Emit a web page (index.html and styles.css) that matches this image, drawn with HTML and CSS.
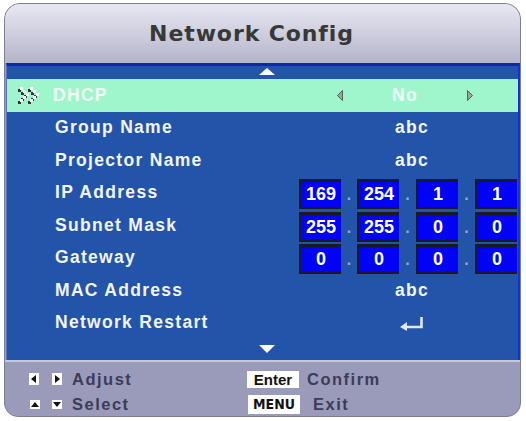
FILE: index.html
```html
<!DOCTYPE html>
<html>
<head>
<meta charset="utf-8">
<link rel="stylesheet" href="styles.css">
</head>
<body>
<div class="panel">
  <div class="title">Network Config</div>
  <div class="menu">
    <div class="arrow-row up"><span class="tri-up"></span></div>

    <div class="row sel">
      <div class="label with-icon">
        <svg class="chev" width="25" height="18" viewBox="0 0 25 18">
          <g fill="#2c3a32">
            <rect x="1" y="3" width="3" height="3"/><rect x="4" y="6" width="3" height="3"/><rect x="7" y="9" width="3" height="3"/><rect x="4" y="12" width="3" height="3"/><rect x="1" y="15" width="3" height="3"/>
            <rect x="11" y="3" width="3" height="3"/><rect x="14" y="6" width="3" height="3"/><rect x="17" y="9" width="3" height="3"/><rect x="14" y="12" width="3" height="3"/><rect x="11" y="15" width="3" height="3"/>
          </g>
          <g fill="#ffffff">
            <rect x="3" y="1" width="3" height="3"/><rect x="6" y="4" width="3" height="3"/><rect x="9" y="7" width="3" height="3"/><rect x="6" y="10" width="3" height="3"/><rect x="3" y="13" width="3" height="3"/>
            <rect x="13" y="1" width="3" height="3"/><rect x="16" y="4" width="3" height="3"/><rect x="19" y="7" width="3" height="3"/><rect x="16" y="10" width="3" height="3"/><rect x="13" y="13" width="3" height="3"/>
          </g>
        </svg>
        <span>DHCP</span>
      </div>
      <div class="val-dhcp">
        <svg width="6" height="11" viewBox="0 0 6 11"><polygon points="5.5,0.5 0.5,5.5 5.5,10.5" fill="#9aa4a0" stroke="#56605a" stroke-width="1"/></svg>
        <span class="no">No</span>
        <svg width="6" height="11" viewBox="0 0 6 11"><polygon points="0.5,0.5 5.5,5.5 0.5,10.5" fill="#9aa4a0" stroke="#56605a" stroke-width="1"/></svg>
      </div>
    </div>

    <div class="row">
      <div class="label">Group Name</div>
      <div class="val-text">abc</div>
    </div>
    <div class="row">
      <div class="label">Projector Name</div>
      <div class="val-text">abc</div>
    </div>
    <div class="row">
      <div class="label">IP Address</div>
      <div class="ip">
        <div class="box">169</div><div class="sep">.</div><div class="box">254</div><div class="sep">.</div><div class="box">1</div><div class="sep">.</div><div class="box">1</div>
      </div>
    </div>
    <div class="row">
      <div class="label">Subnet Mask</div>
      <div class="ip">
        <div class="box">255</div><div class="sep">.</div><div class="box">255</div><div class="sep">.</div><div class="box">0</div><div class="sep">.</div><div class="box">0</div>
      </div>
    </div>
    <div class="row">
      <div class="label">Gateway</div>
      <div class="ip">
        <div class="box">0</div><div class="sep">.</div><div class="box">0</div><div class="sep">.</div><div class="box">0</div><div class="sep">.</div><div class="box">0</div>
      </div>
    </div>
    <div class="row">
      <div class="label">MAC Address</div>
      <div class="val-text">abc</div>
    </div>
    <div class="row">
      <div class="label">Network Restart</div>
      <div class="val-text">
        <svg class="enter" width="24" height="15" viewBox="0 0 24 15">
          <path d="M6 11 H21.5 V1" fill="none" stroke="#e4e6f0" stroke-width="2.6"/>
          <polygon points="0,11 7,6 7,15" fill="#e4e6f0"/>
        </svg>
      </div>
    </div>

    <div class="arrow-row down"><span class="tri-down"></span></div>
  </div>
  <div class="footer">
    <div class="fitem">
      <span class="key"><span class="t-left"></span></span>
      <span class="key k2"><span class="t-right"></span></span>
      <span class="ftext a">Adjust</span>
    </div>
    <div class="fitem">
      <span class="kbox enterk">Enter</span>
      <span class="ftext c">Confirm</span>
    </div>
    <div class="fitem">
      <span class="key small s1"><span class="t-up"></span></span>
      <span class="key small k2"><span class="t-down"></span></span>
      <span class="ftext a">Select</span>
    </div>
    <div class="fitem">
      <span class="kbox menuk">MENU</span>
      <span class="ftext e">Exit</span>
    </div>
  </div>
</div>
</body>
</html>
```

FILE: styles.css
```css
html, body {
  margin: 0;
  padding: 0;
  background: #ffffff;
}

.panel {
  margin: 3px 0 0 4px;
  width: 517px;
  height: 414px;
  box-sizing: border-box;
  border: 1px solid #7e7e98;
  border-radius: 16px 16px 14px 14px;
  background: #9a9aba;
  display: flex;
  flex-direction: column;
  overflow: hidden;
}

.title {
  height: 59px;
  flex: none;
  background: linear-gradient(#e8e8f2, #b4b4ca);
  display: flex;
  align-items: center;
  justify-content: center;
  padding-right: 22px;
  font-family: "DejaVu Sans", sans-serif;
  font-weight: bold;
  font-size: 22px;
  letter-spacing: 0.9px;
  color: #383838;
}

.menu {
  height: 297px;
  flex: none;
  box-sizing: border-box;
  margin-left: 1px;
  background: #2254a9;
  border-top: 3px solid #0b2aa6;
  border-left: 1px solid #5a72c4;
  border-right: 2px solid #0a30f0;
  display: flex;
  flex-direction: column;
}

.arrow-row {
  display: flex;
  justify-content: center;
  padding-left: 9px;
  box-sizing: border-box;
}
.arrow-row.up {
  height: 13px;
  padding-top: 2px;
}
.arrow-row.down {
  height: 21px;
  padding-top: 6px;
}
.tri-up {
  width: 0;
  height: 0;
  border-left: 8px solid transparent;
  border-right: 8px solid transparent;
  border-bottom: 7px solid #ffffff;
}
.tri-down {
  width: 0;
  height: 0;
  border-left: 8px solid transparent;
  border-right: 8px solid transparent;
  border-top: 8px solid #ffffff;
}

.row {
  height: 32.5px;
  flex: none;
  display: flex;
  align-items: center;
  font-family: "Liberation Sans", Arial, sans-serif;
  font-weight: bold;
  font-size: 17.5px;
  letter-spacing: 1.3px;
  color: #f4f6ff;
}
.row.sel {
  background: #9ff6cc;
  color: #f2fff8;
}

.label {
  width: 289px;
  flex: none;
  box-sizing: border-box;
  padding-left: 48px;
  white-space: nowrap;
}
.label.with-icon {
  padding-left: 10px;
  display: flex;
  align-items: center;
  gap: 11px;
}
.chev {
  display: block;
}

.val-text {
  flex: 1;
  padding-left: 10px;
  text-align: center;
  display: flex;
  justify-content: center;
  align-items: center;
}
.enter {
  display: block;
  margin-top: 2px;
}

.val-dhcp {
  margin-left: 41px;
  width: 136px;
  display: grid;
  grid-template-columns: 6px 1fr 6px;
  align-items: center;
}
.val-dhcp svg {
  display: block;
}
.no {
  text-align: center;
}

.ip {
  margin-left: 3px;
  align-self: flex-end;
  display: grid;
  grid-template-columns: 42px 16px 42px 17px 42px 17px 42px;
  letter-spacing: 0;
}
.box {
  height: 30px;
  box-sizing: border-box;
  background: #0202f6;
  border-top: 3px solid #1a1a26;
  border-left: 2px solid #1a1a26;
  border-bottom: 2px solid #1a1a26;
  color: #ffffff;
  font-size: 18px;
  line-height: 25px;
  text-align: center;
}
.sep {
  padding-top: 3px;
  line-height: 25px;
  text-align: center;
  color: #9aa6d0;
  font-size: 16px;
}

.footer {
  flex: 1;
  box-sizing: border-box;
  border-top: 2px solid #c6c6d6;
  padding: 4px 0 0 24px;
  display: grid;
  grid-template-columns: 218px 1fr;
  grid-template-rows: 26px 24px;
  font-family: "Liberation Sans", Arial, sans-serif;
  font-weight: bold;
  font-size: 16.5px;
  letter-spacing: 1.5px;
  color: #3c3c58;
}
.fitem {
  display: flex;
  align-items: center;
}
.key {
  width: 10px;
  height: 12px;
  background: #ffffff;
  display: flex;
  align-items: center;
  justify-content: center;
  flex: none;
}
.key.small {
  height: 9px;
}
.key.s1 {
  margin-left: 1px;
}
.key.k2 {
  margin-left: 13px;
}
.key.small.k2 {
  margin-left: 12px;
}
.t-left {
  border-top: 4px solid transparent;
  border-bottom: 4px solid transparent;
  border-right: 5px solid #111111;
  margin-left: -1px;
}
.t-right {
  border-top: 4px solid transparent;
  border-bottom: 4px solid transparent;
  border-left: 5px solid #111111;
  margin-left: 1px;
}
.t-up {
  border-left: 4px solid transparent;
  border-right: 4px solid transparent;
  border-bottom: 5px solid #111111;
}
.t-down {
  border-left: 4px solid transparent;
  border-right: 4px solid transparent;
  border-top: 5px solid #111111;
}
.ftext.a {
  margin-left: 10px;
}
.ftext.c {
  margin-left: 8px;
}
.ftext.e {
  margin-left: 13px;
}
.kbox {
  background: #ffffff;
  color: #111111;
  width: 52px;
  text-align: center;
  flex: none;
  letter-spacing: 0;
}
.enterk {
  height: 17px;
  line-height: 17px;
  font-size: 15px;
}
.menuk {
  margin-left: 1px;
  height: 19px;
  line-height: 19px;
  font-family: "DejaVu Sans Condensed", "DejaVu Sans", sans-serif;
  font-size: 14px;
}
```
